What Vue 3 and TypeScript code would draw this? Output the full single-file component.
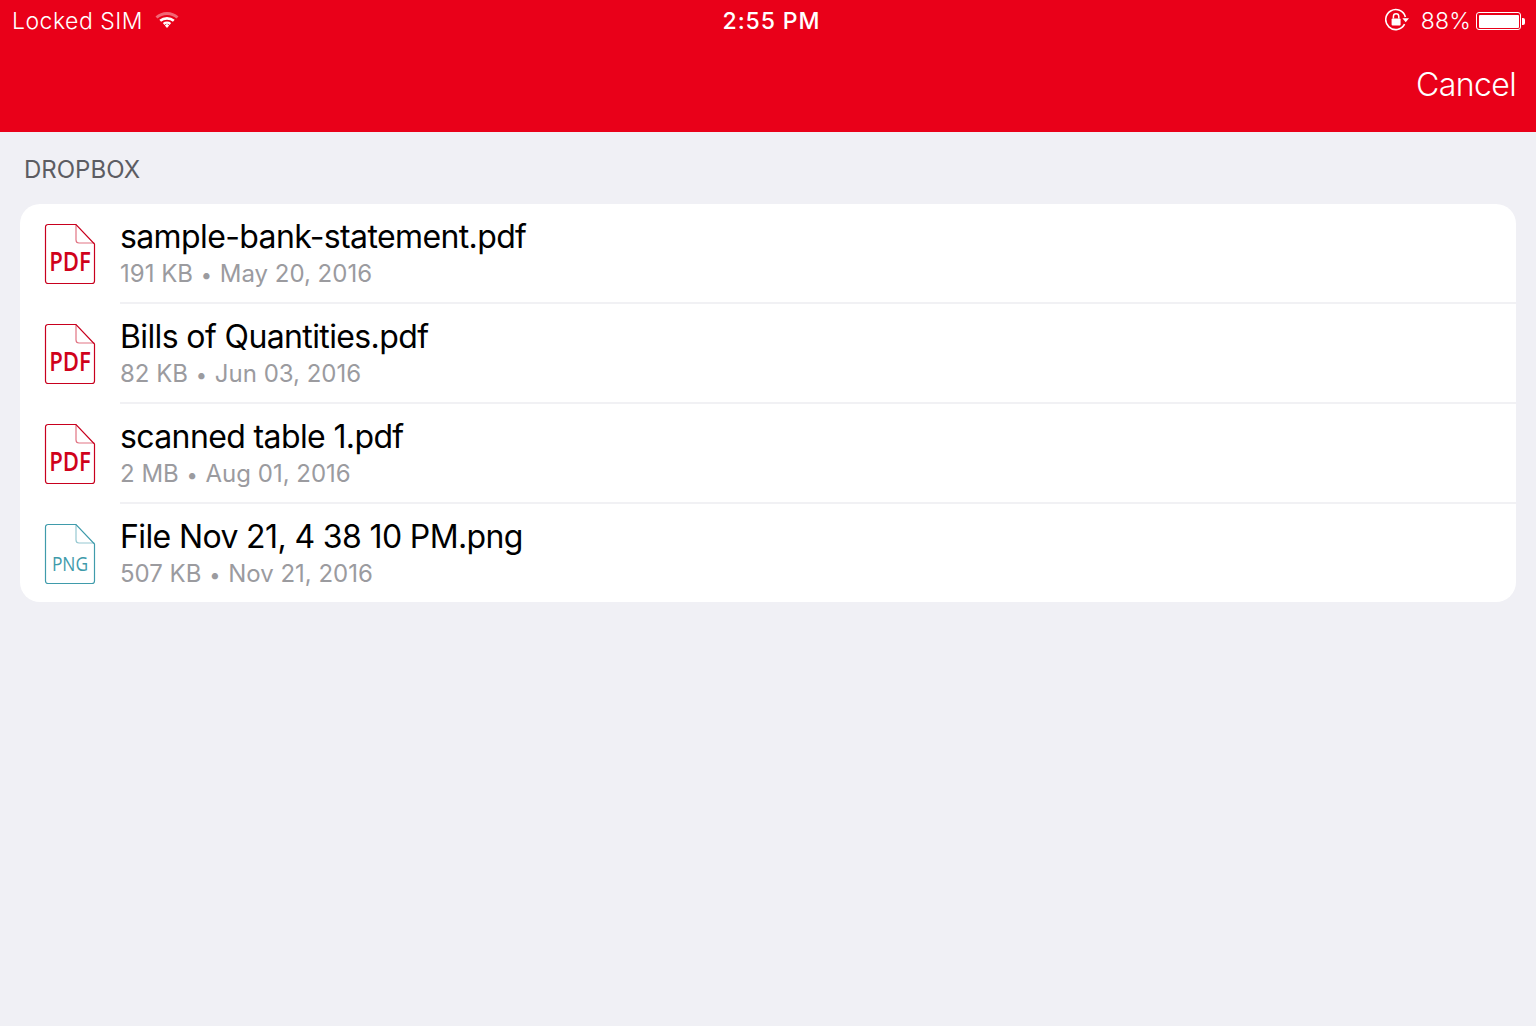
<script setup lang="ts">
interface FileRow { name: string; size: string; date: string; kind: 'PDF' | 'PNG' }
const files: FileRow[] = [
  { name: 'sample-bank-statement.pdf', size: '191 KB', date: 'May 20, 2016', kind: 'PDF' },
  { name: 'Bills of Quantities.pdf', size: '82 KB', date: 'Jun 03, 2016', kind: 'PDF' },
  { name: 'scanned table 1.pdf', size: '2 MB', date: 'Aug 01, 2016', kind: 'PDF' },
  { name: 'File Nov 21, 4 38 10 PM.png', size: '507 KB', date: 'Nov 21, 2016', kind: 'PNG' },
]
</script>

<template>
  <div class="page">
    <header class="header">
      <div class="status">
        <div class="status-left">
          <span class="sim">Locked SIM</span>
          <svg class="wifi" width="24" height="18" viewBox="0 0 24 18">
            <path d="M1.500 6.500C7.500 1 16.500 1 22.500 6.500" fill="none" stroke="#fff" stroke-opacity=".4" stroke-width="3"/>
            <path d="M5.200 9.800C9 6.500 15 6.500 18.800 9.800" fill="none" stroke="#fff" stroke-width="2.600"/>
            <path d="M8.600 13C10.500 11.400 13.500 11.400 15.400 13" fill="none" stroke="#fff" stroke-width="2.400"/>
            <path d="M9.800 14.400L12 12.800L14.200 14.400L12 17Z" fill="#fff"/>
          </svg>
        </div>
        <div class="clock">2:55 PM</div>
        <div class="status-right">
          <svg class="lock" width="26" height="24" viewBox="0 0 26 24">
            <path d="M19.600 16.200A10 10 0 1 1 20.400 9" fill="none" stroke="#fff" stroke-width="1.600"/>
            <path d="M17.400 10.200H24L20.700 14.200Z" fill="#fff"/>
            <rect x="6.600" y="10.400" width="9" height="7" rx="1" fill="#fff"/>
            <path d="M8.400 10.400V8.400A2.700 2.700 0 0 1 13.800 8.400V10.400" fill="none" stroke="#fff" stroke-width="1.500"/>
          </svg>
          <span class="pct">88%</span>
          <div class="battery">
            <div class="battery-body"><div class="battery-fill"></div></div>
            <div class="battery-tip"></div>
          </div>
        </div>
      </div>
      <div class="nav"><span class="cancel">Cancel</span></div>
    </header>

    <main class="content">
      <div class="section">DROPBOX</div>
      <ul class="card">
        <li v-for="f in files" :key="f.name" class="row">
          <div class="doc" :class="f.kind.toLowerCase()">
            <svg width="52" height="62" viewBox="0 0 52 62">
              <path class="outline" d="M3.500 1.500H32L50.500 21V58A2.500 2.500 0 0 1 48 60.500H4A2.500 2.500 0 0 1 1.500 58V4A2.500 2.500 0 0 1 4 1.500Z"/>
              <path class="fold" d="M32 1.500V17A3 3 0 0 0 35 20H50.500"/>
            </svg>
            <span class="doc-label">{{ f.kind }}</span>
          </div>
          <div class="text">
            <div class="name">{{ f.name }}</div>
            <div class="meta">{{ f.size }} <span class="dot">•</span> {{ f.date }}</div>
          </div>
        </li>
      </ul>
    </main>
  </div>
</template>

<style>
html, body { margin: 0; background: #f0f0f5; }
</style>

<style scoped>
.page {
  width: 1536px;
  height: 1026px;
  background: #f0f0f5;
  font-family: Inter, "Liberation Sans", sans-serif;
  overflow: hidden;
}
.header {
  height: 132px;
  background: #e90019;
  color: #fff;
}
.status {
  height: 42px;
  display: grid;
  grid-template-columns: 1fr auto 1fr;
  align-items: center;
  padding: 0 11px 0 12px;
  font-size: 23px;
}
.status-left { display: flex; align-items: center; gap: 12px; }
.sim { font-weight: 300; letter-spacing: 0.5px; }
.wifi { margin-top: -3px; }
.clock { font-weight: 500; font-size: 23px; letter-spacing: 0.9px; margin-left: 6px; }
.status-right { display: flex; align-items: center; justify-content: flex-end; }
.pct { font-weight: 300; margin-left: 10px; letter-spacing: 0.2px; }
.lock { margin-top: -2px; }
.battery { display: flex; align-items: center; margin-left: 5px; }
.battery-body {
  border: 1px solid #fff;
  border-radius: 3px;
  padding: 1.500px;
  width: 40px;
  height: 13px;
}
.battery-fill { width: 100%; height: 100%; background: #fff; border-radius: 1px; }
.battery-tip { width: 3px; height: 7px; background: #fff; border-radius: 0 2px 2px 0; margin-left: 1px; }
.nav {
  height: 90px;
  display: flex;
  justify-content: flex-end;
  padding: 0 20px;
}
.cancel { font-size: 32px; font-weight: 300; line-height: 85px; letter-spacing: -0.6px; }
.content { padding: 0 20px; }
.section {
  height: 72px;
  box-sizing: border-box;
  padding: 24px 0 0 4px;
  font-size: 24px;
  line-height: 28px;
  color: #5c5c62;
  font-weight: 400;
}
.card {
  list-style: none;
  margin: 0;
  padding: 0;
  background: #fff;
  border-radius: 20px;
  overflow: hidden;
}
.row {
  height: 100px;
  display: flex;
  align-items: flex-start;
}
.row:last-child { height: 98px; }
.doc {
  position: relative;
  flex: none;
  width: 52px;
  height: 62px;
  margin: 19px 0 0 24px;
}
.doc svg { display: block; }
.doc-label {
  position: absolute;
  left: 0;
  right: 0;
  text-align: center;
  font-family: "Open Sans", sans-serif;
  line-height: 1;
  white-space: nowrap;
}
.pdf .doc-label {
  top: 24px;
  font-size: 27px;
  font-weight: 600;
  color: #d0021b;
  transform: scaleX(0.82);
}
.png .doc-label {
  top: 31px;
  font-size: 20px;
  font-weight: 400;
  color: #3f9bab;
  transform: scaleX(0.87);
}
.text {
  flex: 1;
  margin-left: 24px;
  height: 100px;
  box-sizing: border-box;
  border-bottom: 2px solid #f1f1f4;
  padding-top: 13px;
}
.row:last-child .text { border-bottom: 0; height: 98px; }
.name {
  font-size: 32px;
  line-height: 40px;
  color: #000;
  letter-spacing: -0.62px;
}
.meta {
  font-size: 24px;
  line-height: 34px;
  color: #9b9b9f;
}
.dot { font-size: 20px; margin: 0 1px; }
.outline, .fold { fill: none; stroke-width: 1.2; }
.pdf .outline { stroke: #c8001e; }
.pdf .fold { stroke: #c8001e; stroke-opacity: .55; }
.png .outline { stroke: #3f9bab; }
.png .fold { stroke: #3f9bab; stroke-opacity: .55; }
</style>
